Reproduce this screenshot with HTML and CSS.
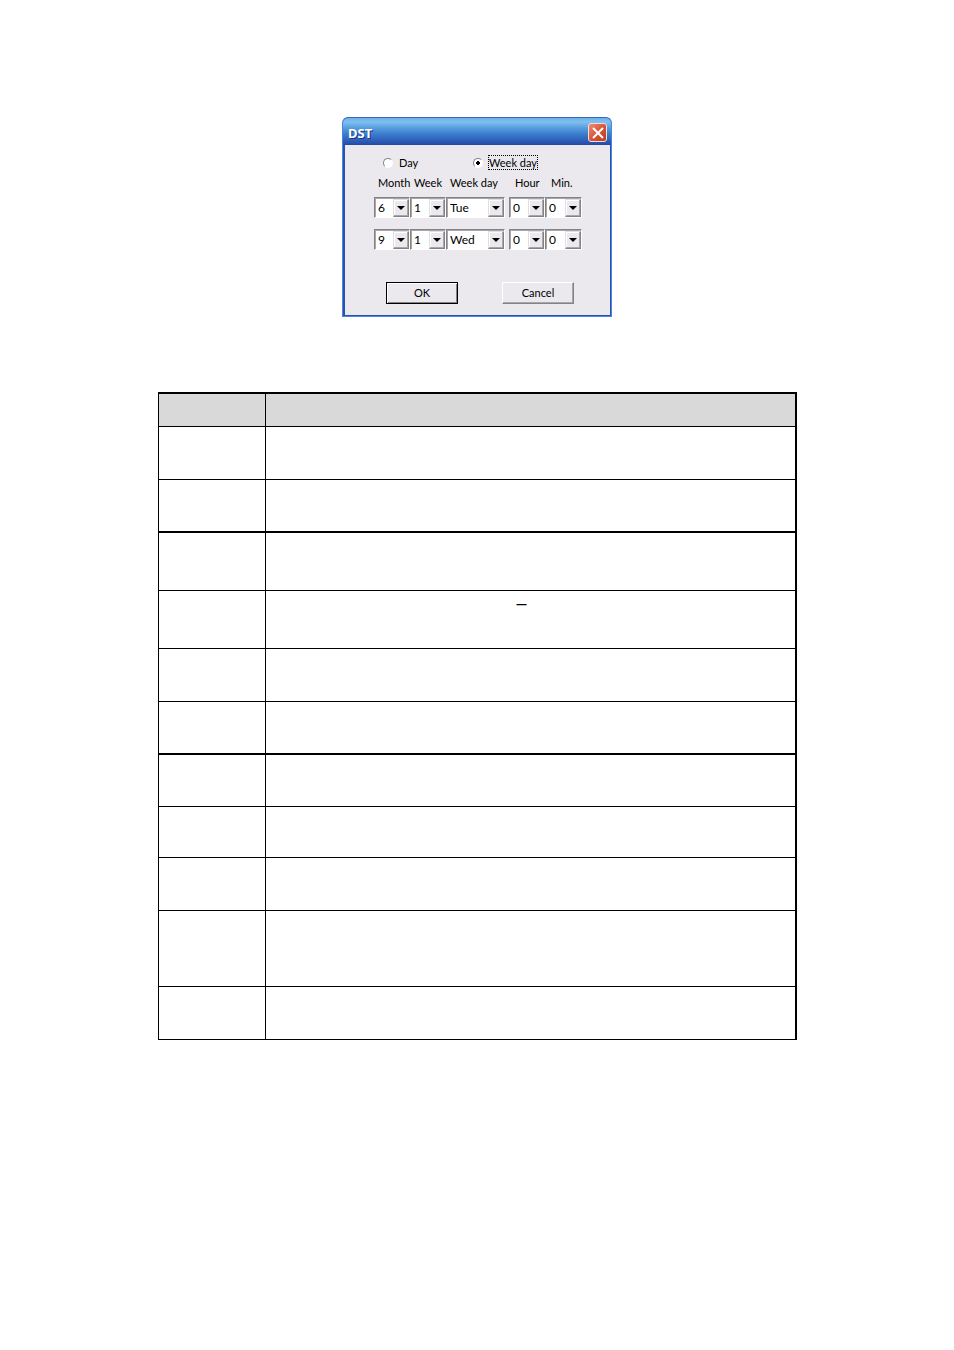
FILE: index.html
```html
<!DOCTYPE html>
<html lang="en">
<head>
<meta charset="utf-8">
<title>DST</title>
<link rel="stylesheet" href="styles.css">
</head>
<body>
<main class="page">
  <form class="dialog" aria-labelledby="dialog-title">
    <header class="titlebar">
      <h1 class="title" id="dialog-title">DST</h1>
      <button class="close" type="button" aria-label="Close">
        <svg viewBox="0 0 16 16" width="16" height="16"><path d="M3 3l10 10M13 3L3 13" stroke="#fff" stroke-width="2" fill="none"/></svg>
      </button>
    </header>
    <div class="content">
      <div class="modes">
        <label class="mode"><input class="radio" type="radio" name="mode"><span class="mode-text">Day</span></label>
        <label class="mode"><input class="radio" type="radio" name="mode" checked><span class="mode-text focused">Week day</span></label>
      </div>
      <div class="labels">
        <label for="month1">Month</label>
        <label for="week1">Week</label>
        <label for="day1">Week day</label>
        <label class="time-label" for="hour1">Hour</label>
        <label class="time-label" for="min1">Min.</label>
      </div>
      <div class="fields">
        <span class="combo"><select id="month1"><option>6</option></select></span>
        <span class="combo"><select id="week1"><option>1</option></select></span>
        <span class="combo"><select id="day1"><option>Tue</option></select></span>
        <span class="combo"><select id="hour1"><option>0</option></select></span>
        <span class="combo"><select id="min1"><option>0</option></select></span>
        <span class="combo"><select aria-label="End month"><option>9</option></select></span>
        <span class="combo"><select aria-label="End week"><option>1</option></select></span>
        <span class="combo"><select aria-label="End week day"><option>Wed</option></select></span>
        <span class="combo"><select aria-label="End hour"><option>0</option></select></span>
        <span class="combo"><select aria-label="End minute"><option>0</option></select></span>
      </div>
      <div class="actions">
        <button class="button default" type="button">OK</button>
        <button class="button" type="button">Cancel</button>
      </div>
    </div>
  </form>

  <table class="params">
    <thead>
      <tr class="head"><th></th><th></th></tr>
    </thead>
    <tbody>
      <tr><td></td><td></td></tr>
      <tr class="heavy"><td></td><td></td></tr>
      <tr class="tall"><td></td><td></td></tr>
      <tr class="tall"><td></td><td class="note">–</td></tr>
      <tr><td></td><td></td></tr>
      <tr class="heavy"><td></td><td></td></tr>
      <tr class="short"><td></td><td></td></tr>
      <tr class="shorter"><td></td><td></td></tr>
      <tr><td></td><td></td></tr>
      <tr class="taller"><td></td><td></td></tr>
      <tr><td></td><td></td></tr>
    </tbody>
  </table>
</main>
</body>
</html>
```
FILE: styles.css
```css
* { box-sizing: border-box; }

body {
  margin: 0;
  background: #fff;
  color: #000;
  font: 11px/14px Lato, "Liberation Sans", sans-serif;
}

.page {
  display: flex;
  flex-direction: column;
  align-items: center;
  gap: 75px;
  padding: 117px 157px 80px 158px;
}

/* Dialog */
.dialog {
  width: 270px;
  margin-right: 1px;
  border-radius: 6px 6px 0 0;
  overflow: hidden;
  background: #2a50b0;
  border: 1px solid #4a86dc;
  border-top-color: #3a64b8;
}

.titlebar {
  display: flex;
  align-items: center;
  justify-content: space-between;
  height: 27px;
  padding: 2px 4px 0 5px;
  background: linear-gradient(#6cb0ea 0, #80c0f0 15%, #5a9fe0 35%, #3a7ccc 60%, #2c58b4 88%, #2448a4 100%);
}

.title {
  margin: 0;
  color: #fff;
  font: bold 13px/16px "Noto Sans", sans-serif;
  text-shadow: 1px 1px 0 #1a3484;
}

.close {
  display: flex;
  align-items: center;
  justify-content: center;
  width: 19px;
  height: 19px;
  padding: 0;
  border: 1px solid #f4dcd8;
  border-radius: 3px;
  background: linear-gradient(135deg, #e89078, #d8563a 50%, #b83c1c);
}

.content {
  margin: 0 1px 1px 2px;
  padding: 10px 0 11px 29px;
  background: #ebe9ed;
}

.modes {
  display: grid;
  grid-template-columns: 90px auto;
  justify-content: start;
  padding-left: 9px;
}

.mode {
  display: flex;
  align-items: center;
  gap: 5px;
}

.radio {
  appearance: none;
  width: 10px;
  height: 10px;
  margin: 0;
  border: 1px solid #848284;
  border-right-color: #fff;
  border-bottom-color: #fff;
  border-radius: 50%;
  background: #fff;
}

.radio:checked { background: radial-gradient(circle, #000 0 2px, #fff 2px); }

.mode-text {
  line-height: 13px;
  border: 1px solid transparent;
}

.focused { border: 1px dotted #000; }

.labels,
.fields {
  display: grid;
  grid-template-columns: 36px 36px 63px 36px 37px;
  justify-content: start;
}

.labels {
  padding: 6px 0 7px 4px;
}

.labels label { white-space: nowrap; }

.labels .time-label { padding-left: 2px; }

.fields { row-gap: 11px; }

.combo {
  display: grid;
  grid-template-columns: 1fr 16px;
  height: 21px;
  border: 1px solid #848284;
  border-right-color: #fff;
  border-bottom-color: #fff;
  background: #fff;
  padding: 1px 0 0 1px;
  box-shadow: inset 1px 1px 0 #a7a6aa;
}

.combo:nth-child(5n + 3) { margin-right: 4px; }

.combo select {
  appearance: none;
  grid-area: 1 / 1 / 2 / 3;
  min-width: 0;
  width: 100%;
  padding: 0 0 0 2px;
  border: 0;
  background: transparent;
  color: #000;
  font: 12px/16px Lato, "Liberation Sans", sans-serif;
}

/* Raised drop-down button */
.combo::after {
  content: "";
  grid-area: 1 / 2;
  pointer-events: none;
  border: 1px solid;
  border-color: #dcdfe4 #848284 #848284 #dcdfe4;
  box-shadow: inset -1px -1px 0 #a7a6aa, inset 1px 1px 0 #fff;
  background: url("data:image/svg+xml,%3Csvg xmlns='http://www.w3.org/2000/svg' width='8' height='4'%3E%3Cpath d='M0 0h8L4 4z'/%3E%3C/svg%3E") center no-repeat #ebe9ed;
}

.actions {
  display: flex;
  gap: 44px;
  padding: 32px 0 0 12px;
}

.button {
  width: 72px;
  height: 22px;
  padding: 0;
  border: 1px solid;
  border-color: #fff #848284 #848284 #fff;
  box-shadow: inset -1px -1px 0 #a7a6aa;
  background: #ebe9ed;
  color: #000;
  font: inherit;
}

.default {
  border-color: #000;
  box-shadow: inset 1px 1px 0 #fff, inset -1px -1px 0 #848284;
}

/* Parameter table */
.params {
  width: 100%;
  table-layout: fixed;
  border-collapse: separate;
  border-spacing: 0;
  border: solid #000;
  border-width: 2px 1px 0 1px;
}

.params th,
.params td {
  height: 53px;
  padding: 0;
  border: solid #000;
  border-width: 0 1px 1px 0;
}

.params th:first-child { width: 107px; }

.params .head th {
  height: 33px;
  background: #d9d9d9;
}

.params .heavy td { border-bottom-width: 2px; }
.params .short td { height: 52px; }
.params .shorter td { height: 51px; }
.params .tall td { height: 58px; }
.params .taller td { height: 76px; }

.params .note {
  padding: 2px 18px 0 0;
  text-align: center;
  vertical-align: top;
  font: 18px/20px "Liberation Sans", sans-serif;
}
```
